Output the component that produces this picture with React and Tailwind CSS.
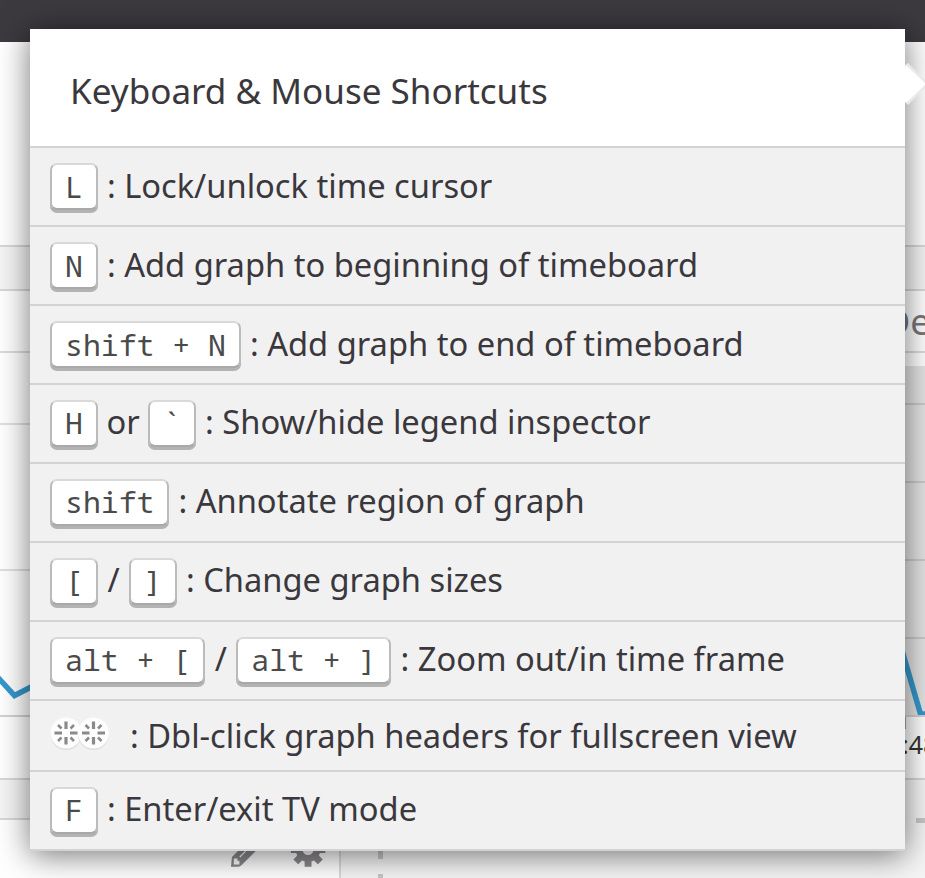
const keyCls =
  "inline-block h-[47px] rounded-[7px] border-2 border-t-[#d9d9d9] border-x-[#bbbbbb] border-b-[#a9a9a9] bg-white px-[13px] font-['Noto_Sans_Mono','DejaVu_Sans_Mono',monospace] text-[29.8px] text-[#4a4a4a] shadow-[0_3px_0_#b3b3b3] whitespace-pre";

function Key({ children, tight }) {
  return <kbd className={`${keyCls} ${tight ? "leading-[41px]" : "leading-[43px]"}`}>{children}</kbd>;
}

function Row({ keys, sep, label, low }) {
  return (
    <div
      className={`flex h-[79px] items-start border-b-2 border-[#d3d3d3] pl-5 pt-[15px] ${low ? "leading-[45px]" : "leading-[43px]"}`}
    >
      {keys.map((k, i) => (
        <div key={k} className="flex">
          {i > 0 && <span className={sep === "/" ? "px-[9.5px]" : "px-[8.5px]"}>{sep}</span>}
          <Key tight={!low}>{k}</Key>
        </div>
      ))}
      <span className="pl-[9px] whitespace-pre">: {label}</span>
    </div>
  );
}

function Click({ x }) {
  return (
    <g transform={`translate(${x} 16)`}>
      <circle cy="1.5" r="15.500" fill="#dedede" />
      <circle r="15.500" fill="#fdfdfd" />
      <g stroke="#8a8a8a" strokeWidth="3.200">
        <path d="M0-11.500V-4M0 4V11.500M-11.500 0H-4M4 0H11.500" />
        <path d="M-8-8L-4.500-4.500M8-8L4.500-4.500M-8 8L-4.500 4.500M8 8L4.500 4.500" strokeWidth="2.600" />
      </g>
    </g>
  );
}

function LeftPage() {
  return (
    <div className="w-[341px] border-r-2 border-[#dadade] bg-white">
      <div className="h-[203px]" />
      <div className="h-[46px] border-y-2 border-[#d8d8dc] bg-[#f5f5f5]" />
      <div className="h-[62px] border-b-2 border-[#dcdce0]" />
      <div className="h-[72px] border-b-2 border-[#e0e0e2]" />
      <div className="h-[146px] border-b-2 border-[#e0e0e2]" />
      <div className="h-[146px] border-b-2 border-[#d3d3d3]">
        <svg className="block h-[144px] w-[60px]" fill="none">
          <path d="M-4 104.500L14.500 124.500L36 113.500" stroke="#3598cd" strokeWidth="5.500" />
        </svg>
      </div>
      <div className="h-[61px]" />
      <div className="h-[42px] border-y-2 border-[#d8d8dc] bg-[#f5f5f5]" />
      <div className="flex pl-[229px] pt-[18px]">
        <svg className="h-10 w-28" viewBox="0 0 112 40">
          <path d="M2 29L3 19L20 2L32 8L13 27Q11 29 8 29Z" fill="#8b888d" />
          <path d="M5.500 21V26H10V23.500H8V21ZM11 19L17 13" fill="#fff" stroke="#fff" strokeWidth="1.200" />
          <g transform="translate(79.500 11.500)">
            <circle cx="1" r="9" fill="none" stroke="#8b888d" strokeWidth="7" />
            <path d="M1-17.500V-11M1 11V17.500M-16.500 0H-10M12 0H18.500M-11.500-12.500L-7-8M13.500-12.500L9-8M-11.500 12.500L-7 8M13.500 12.500L9 8" stroke="#8b888d" strokeWidth="7" />
          </g>
        </svg>
      </div>
    </div>
  );
}

function RightPage() {
  return (
    <div className="flex-1 bg-[#f5f5f5]">
      <div className="h-[203px] bg-white" />
      <div className="h-[46px] border-y-2 border-[#d8d8dc] bg-[#f5f5f5]" />
      <div className="h-[62px] border-b-2 border-[#dcdce0] bg-white pl-[543px] text-[36px] leading-[62px] text-[#77777a]">De</div>
      <div className="h-[13px] bg-white" />
      <div className="h-[39px] border-b-2 border-[#cacaca] bg-[#e4e4e4]" />
      <div className="h-[78px] border-b-2 border-[#cacaca] bg-[#e4e4e4]" />
      <div className="h-[78px] border-b-2 border-[#cacaca] bg-[#e4e4e4]" />
      <div className="h-[78px] border-b-2 border-[#cacaca] bg-[#e4e4e4]" />
      <div className="h-[78px] border-b-2 border-[#d3d3d3] bg-[#e4e4e4] pl-[559px]">
        <svg className="block h-[76px] w-[25px]" fill="none">
          <path d="M1 8L20.500 75H25" stroke="#3598cd" strokeWidth="5.500" />
        </svg>
      </div>
      <div className="flex h-[61px] bg-white text-[25px] leading-[54px] text-[#333] whitespace-nowrap">
        <div className="ml-[564px] h-[12px] w-px bg-[#aaa]" />
        <span className="-ml-[4px]">:48</span>
      </div>
      <div className="h-[44px] border-t-2 border-[#d8d8dc]">
        <div className="ml-[575px] mt-[38px] h-[5px] bg-[#c7c7c7]" />
      </div>
      <div className="ml-[37px] mt-[29px] h-[8px] w-[5px] bg-[#c7c7c7]" />
      <div className="ml-[37px] mt-[15px] h-[8px] w-[5px] bg-[#c7c7c7]" />
    </div>
  );
}

export default function App() {
  return (
    <div className="relative h-[878px] w-[925px] overflow-hidden bg-white font-['Noto_Sans',sans-serif]">
      <div className="h-[42px] bg-[#3c393f]" />
      <div className="flex h-[836px]">
        <LeftPage />
        <RightPage />
      </div>
      <div className="absolute left-[30px] top-[29px] w-[875px] bg-[#f1f1f1] text-[32.66px] text-[#3a383d] shadow-[0_4px_30px_rgba(0,0,0,0.55)]">
        <svg className="absolute left-[875px] top-[33px] h-[44px] w-[22px]">
          <path d="M0 3L3 1L24 22L3 43L0 40Z" fill="#e9e9e9" />
          <path d="M0 5L2 4L21 22L2 40L0 40Z" fill="#fff" />
        </svg>
        <h1 className="h-[119px] border-b-2 border-[#d3d3d3] bg-white pl-10 text-[35.05px] leading-[123px]">
          Keyboard &amp; Mouse Shortcuts
        </h1>
        <Row low keys={["L"]} label="Lock/unlock time cursor" />
        <Row low keys={["N"]} label="Add graph to beginning of timeboard" />
        <Row low keys={["shift + N"]} label="Add graph to end of timeboard" />
        <Row keys={["H", "`"]} sep="or" label="Show/hide legend inspector" />
        <Row keys={["shift"]} label="Annotate region of graph" />
        <Row keys={["[", "]"]} sep="/" label="Change graph sizes" />
        <Row keys={["alt + [", "alt + ]"]} sep="/" label="Zoom out/in time frame" />
        <div className="flex h-[71px] border-b-2 border-[#d3d3d3] pl-5 leading-[70px]">
          <svg className="mt-4 h-[36px] w-[80px]">
            <Click x={16} />
            <Click x={43.5} />
          </svg>
          <span>: Dbl-click graph headers for fullscreen view</span>
        </div>
        <Row keys={["F"]} label="Enter/exit TV mode" />
      </div>
    </div>
  );
}
